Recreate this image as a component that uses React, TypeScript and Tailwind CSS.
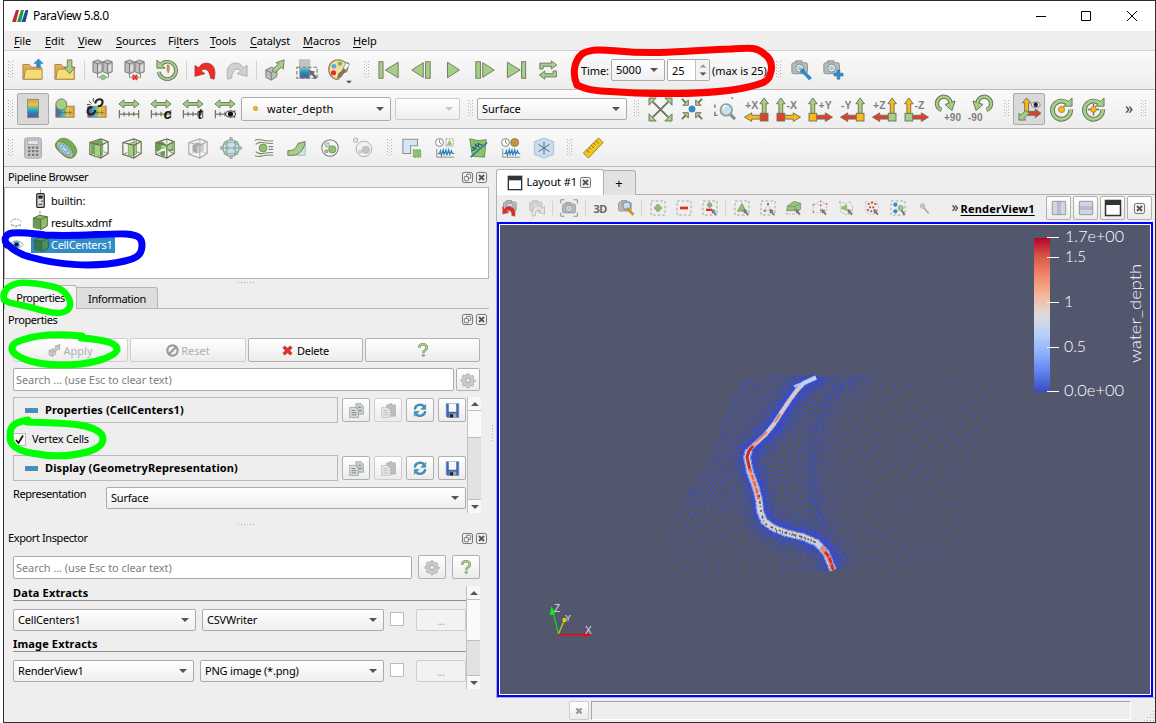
import React from "react";

type Kids = { children?: React.ReactNode };

const G = "#a3d086";
const O = "#6f745c";
const RAINBOW = "url(#rainbow)";

/* ---------- icon drawings, all on a 24 x 24 grid ---------- */

const arrowsH = (
  <>
    <path d="M1 6.5 6.500 2v3h11V2L23 6.500 17.500 11V8h-11v3Z" fill={G} stroke={O} />
    <path d="M1.500 13v9M22.500 13v9M1.500 17.500h21M6.700 15v5M12 15v5M17.200 15v5" stroke={O} strokeWidth="1.300" fill="none" />
  </>
);

const camera = (c = "#b9bab9") => (
  <>
    <rect x="2" y="4" width="17" height="12" rx="2" fill={c} stroke="#8b8c8b" />
    <path d="M6 4V2h7v2" fill={c} stroke="#8b8c8b" />
    <circle cx="10.500" cy="10" r="4.300" fill="#e8eef2" stroke="#7f8587" />
    <circle cx="10.500" cy="10" r="2.400" fill="#9fc9e6" />
  </>
);

const servers = (
  <>
    <path d="m1 3 5-2 5 2v11l-5 2-5-2Z" fill="#bdbdbd" stroke="#777" />
    <path d="m1 3 5 2.500L11 3M6 5.500V16" fill="none" stroke="#777" />
    <path d="m12 3 5-2 5 2v11l-5 2-5-2Z" fill="#bdbdbd" stroke="#777" />
    <path d="m12 3 5 2.500L22 3M17 5.500V16" fill="none" stroke="#777" />
    <path d="m7 7 3-1.500v7L7 14ZM18 7l3-1.500v7L18 14Z" fill="#e5dfe2" />
    <path d="M6 16v4h4M18 16v4h-4" fill="none" stroke="#888" />
  </>
);

const dashBox = <rect x="1.500" y="1.500" width="21" height="21" fill="none" stroke="#909090" strokeWidth="1.200" strokeDasharray="4 3" />;
const smallCursor = <path d="m14 13 7 3-2.500 1 3.500 4-2 2-3.500-4-1.500 2Z" fill="#777" />;

const cube = (edge = "#66704f") => (
  <>
    <path d="m2 6 12-4 8 3v13l-8 5-12-4Z" fill="#f4f4f4" stroke={edge} strokeWidth="1.300" />
    <path d="M14 2v5M2 19l5-2M22 18l-5-2" fill="none" stroke={edge} strokeWidth=".8" />
  </>
);
const cubeFront = (edge = "#66704f") => <path d="m2 6 12 3 8-4M14 9v14" fill="none" stroke={edge} strokeWidth="1.300" />;

function axisIcon(label: string, flip: boolean, up: string, side: string, base: string) {
  const bx = flip ? 16 : 0;
  const cx = bx + 4;
  return (
    <>
      <path d={`M${cx - 2} 16V6h-2.500L${cx} 0l4.500 6h-2.500v10Z`} fill={up} stroke={O} />
      {flip ? (
        <path d="M16 22H7v2.500L-.500 20 7 15.500V18h9Z" fill={side} stroke={O} />
      ) : (
        <path d="M8 22h9v2.500L24.500 20 17 15.500V18H8Z" fill={side} stroke={O} />
      )}
      <rect x={bx} y="16" width="8" height="8" fill={base} stroke={O} />
      <text x={flip ? 0 : 10} y="11.500" fontSize="11" fontWeight="700" fill="#808080" fontFamily="Liberation Sans">
        {label}
      </text>
    </>
  );
}

const R = "#e2402c";
const Y = "#fbb817";

const ring = (
  <>
    <path d="M20 7.500A9.500 9.500 0 1 0 21.500 12" fill="none" stroke={O} strokeWidth="5" />
    <path d="m14 8.500h9V0Z" fill={G} stroke={O} />
    <path d="M20 7.500A9.500 9.500 0 1 0 21.500 12" fill="none" stroke={G} strokeWidth="3" />
  </>
);

const turn = (
  <>
    <path d="M5.500 13A6.800 6.800 0 1 1 14.500 6" fill="none" stroke={O} strokeWidth="4.400" />
    <path d="M9 7.500 19 4l-3 9.500Z" fill={G} stroke={O} />
    <path d="M5.500 13A6.800 6.800 0 1 1 14.500 6" fill="none" stroke={G} strokeWidth="2.400" />
  </>
);

const icons: Record<string, React.ReactNode> = {
  open: (
    <>
      <path d="M1 6h7l2 3h11v13H1Z" fill="#e8ae4d" stroke="#a0834a" />
      <path d="M4 11h18v11H2Z" fill="#f6dc74" stroke="#a0834a" />
      <path d="M16 9V5h-3l5-5 5 5h-3v4Z" fill="#2a8fd0" stroke="#3b7395" strokeWidth=".6" />
    </>
  ),
  save: (
    <>
      <path d="M1 6h7l2 3h12v13H1Z" fill="#e8ae4d" stroke="#a0834a" />
      <path d="M4 11h18v11H2Z" fill="#f6dc74" stroke="#a0834a" />
      <path d="M14.500 1h5v8H23l-6 7-6-7h3.500Z" fill={G} stroke={O} />
    </>
  ),
  connect: (
    <>
      {servers}
      <circle cx="12" cy="20" r="2.700" fill="#8ccb77" stroke="#7b9a70" strokeWidth=".6" />
    </>
  ),
  disconnect: (
    <>
      {servers}
      <path d="m9.500 17.500 5 5m0-5-5 5" stroke="#e2402c" strokeWidth="2.600" />
    </>
  ),
  history: (
    <>
      <path d="M4 8a9.500 9.500 0 1 1-1 6" fill="none" stroke={O} strokeWidth="4" />
      <path d="M1 1v9h9Z" fill={G} stroke={O} />
      <path d="M4 8a9.500 9.500 0 1 1-1 6" fill="none" stroke={G} strokeWidth="2.200" />
      <path d="M12 6.500h2.500v6l-1.200 3-1.300-3Z" fill="#d4a13b" stroke="#94762f" strokeWidth=".5" />
    </>
  ),
  undo: <path d="M1 7v12l11-3-4-3c3-4 9-2 10 8l4 1C25 10 20 5 15 4.500 10 4 7 6 5.500 9.500Z" fill="#ee2b26" stroke="#a23b30" strokeWidth=".7" />,
  redo: <path d="M23 7v12l-11-3 4-3c-3-4-9-2-10 8l-4 1C-1 10 4 5 9 4.500c5-.5 8 1.500 9.500 5Z" fill="#cfcfcf" stroke="#a2a2a2" strokeWidth=".8" />,
  extract: (
    <>
      <path d="m2 12 6-3 6 2v8l-6 4-6-3Z" fill="#bdbdbd" stroke="#777" />
      <path d="m2 12 6 3 6-4M8 15v8" stroke="#777" fill="none" />
      <path d="m9 12 7-7-3-1 9-3-1 10-2-2-7 6Z" fill={G} stroke={O} />
    </>
  ),
  mapsel: (
    <>
      <rect x="4" y="1" width="11" height="20" fill={RAINBOW} stroke="#aaa" />
      <rect x="4" y="1" width="11" height="9" fill="#c2c3c6" />
      <rect x="1" y="9" width="22" height="12" fill="none" stroke="#777" strokeWidth="1.200" strokeDasharray="4 2" />
      <path d="m14 12 7 2-2 1.500 4 4.500-2 2-4-5-1.500 2Z" fill="#666" />
    </>
  ),
  palette: (
    <>
      <path d="M11 1C4 1 0 7 1 13c1 7 7 10 10 9 3-2-1-5 2-7 3-1 7 1 8-3C23 5 17 1 11 1Z" fill="#f5dca5" stroke="#8f8157" strokeWidth="1.400" />
      <circle cx="6.500" cy="8" r="2.600" fill="#4eaee0" />
      <circle cx="13" cy="5" r="2.400" fill="#75b45d" />
      <circle cx="6" cy="15" r="2.800" fill="#e52b24" />
      <path d="m21 4 2 1-7 12c-2 4-5 4-6 3 3-2 1-4 4-5Z" fill="#8a7a55" stroke="#555" strokeWidth=".8" />
      <path d="m20 4 3.500 2-4 6-3-2Z" fill="#fff" stroke="#777" strokeWidth=".7" />
    </>
  ),
  first: (
    <>
      <rect x="1" y="3" width="4.500" height="18" fill={G} stroke={O} />
      <path d="M22 3.500v17L8 12Z" fill={G} stroke={O} />
    </>
  ),
  prev: (
    <>
      <rect x="17" y="3" width="5" height="18" fill={G} stroke={O} />
      <path d="M14.500 4v16L2 12Z" fill={G} stroke={O} />
    </>
  ),
  play: <path d="M6 3.500 19 12 6 20.500Z" fill={G} stroke={O} />,
  next: (
    <>
      <rect x="2" y="3" width="5" height="18" fill={G} stroke={O} />
      <path d="M9.500 4v16L22 12Z" fill={G} stroke={O} />
    </>
  ),
  last: (
    <>
      <rect x="17" y="3" width="4.500" height="18" fill={G} stroke={O} />
      <path d="M1.500 3.500v17L15.500 12Z" fill={G} stroke={O} />
    </>
  ),
  loop: (
    <>
      <path d="M2 11V4.500h12.500V2l6 4.500-6 4.500V8H5.500v3Z" fill={G} stroke={O} />
      <path d="M20 13v6.500H7.500V22l-6-4.500 6-4.500v3h9v-3Z" fill={G} stroke={O} />
    </>
  ),
  camwrench: (
    <>
      {camera()}
      <path d="m12 11 3 0 1.500 3 7 6.500-2.500 2.500-6.500-7-3-1.500Z" fill="#2a8fd0" stroke="#356d94" strokeWidth=".6" />
    </>
  ),
  camplus: (
    <>
      {camera()}
      <path d="M16.500 12h3v3.500H23v3h-3.500V22h-3v-3.500H13v-3h3.500Z" fill="#2a8fd0" stroke="#356d94" strokeWidth=".6" />
    </>
  ),
  bar: <rect x="6" y="1.500" width="12" height="20" fill={RAINBOW} stroke="#8a8a7a" />,
  editmap: (
    <>
      <rect x="2" y="9" width="20" height="12" fill="url(#rainbowH)" stroke="#8d8a63" />
      <path d="M4 16h16M7 14v4M12 14v4M17 14v4" stroke="#666" strokeWidth=".8" />
      <circle cx="8" cy="7" r="6" fill={G} stroke={O} />
    </>
  ),
  unlink: (
    <>
      <rect x="2" y="9" width="20" height="12" fill="url(#rainbowH)" stroke="#8d8a63" />
      <path d="M4 16h16M12 14v4M17 14v4" stroke="#666" strokeWidth=".8" />
      <path d="M10 6c1-6 9-6 8-1 0 2-2 4-5 4M7 10c-6 0-7 7-2 8 3 0 5-2 5-5" fill="none" stroke="#222" strokeWidth="2.400" />
      <path d="m3 3 3 3M8 0v4M1 7h4" fill="none" stroke="#444" strokeWidth="1" />
    </>
  ),
  range: arrowsH,
  rangec: (
    <>
      {arrowsH}
      <text x="15" y="22.500" fontSize="15" fontWeight="700" fontStyle="italic" fontFamily="Liberation Sans" fill="#111">c</text>
    </>
  ),
  ranget: (
    <>
      {arrowsH}
      <text x="17" y="23" fontSize="15" fontWeight="700" fontStyle="italic" fontFamily="Liberation Sans" fill="#111">t</text>
    </>
  ),
  rangev: (
    <>
      {arrowsH}
      <ellipse cx="18" cy="17.500" rx="5.500" ry="3.500" fill="#ddd" stroke="#333" />
      <circle cx="18" cy="17.500" r="2.800" fill="#111" />
    </>
  ),
  reset: (
    <>
      <path d="m4 4 16 16M20 4 4 20" stroke={O} strokeWidth="2" />
      <path d="M0 0h7.500L0 7.500ZM24 0h-7.500L24 7.500ZM0 24h7.500L0 16.500ZM24 24h-7.500L24 16.500Z" fill={G} stroke={O} />
    </>
  ),
  zoomdata: (
    <>
      <path d="m1 1 5 5M23 1l-5 5M1 23l5-5M23 23l-5-5" stroke={O} strokeWidth="2" />
      <path d="M8 2v6H2ZM16 2v6h6ZM8 22v-6H2ZM16 22v-6h6Z" fill={G} stroke={O} />
      <circle cx="12" cy="12" r="3.400" fill="#2a8fd0" stroke="#356d94" strokeWidth=".7" />
    </>
  ),
  zoombox: (
    <>
      <path d="M2 7v4M2 15v4h3M20 0h2" stroke="#777" strokeWidth="1.500" fill="none" />
      <path d="m18 17 6 6" stroke="#8d8d8d" strokeWidth="3.500" />
      <circle cx="14.500" cy="13" r="6.300" fill="#c6e1f2" stroke="#999c9e" strokeWidth="2" />
      <path d="M11 12c0-2 1.500-3.500 3.500-3.500" fill="none" stroke="#fff" strokeWidth="1.500" />
    </>
  ),
  px: axisIcon("+X", true, G, Y, R),
  mx: axisIcon("-X", false, G, Y, R),
  py: axisIcon("+Y", false, G, R, Y),
  my: axisIcon("-Y", true, G, R, Y),
  pz: axisIcon("+Z", true, Y, R, G),
  mz: axisIcon("-Z", false, Y, R, G),
  rotp: (
    <>
      {turn}
      <text x="8" y="24" fontSize="10" fontWeight="700" fontFamily="Liberation Sans" fill="#808080">+90</text>
    </>
  ),
  rotm: (
    <>
      <g transform="translate(24 0) scale(-1 1)">{turn}</g>
      <text x="0" y="24" fontSize="10" fontWeight="700" fontFamily="Liberation Sans" fill="#808080">-90</text>
    </>
  ),
  axes: (
    <>
      <path d="M7 15V5H4.500L9 0l4.500 5H11v10Z" fill={Y} stroke={O} />
      <path d="M10 14h8v-2.500L24 16l-6 4.500V18h-8Z" fill={R} stroke={O} />
      <path d="m8 13 4 3-6 5 2 2H1v-7l2 2Z" fill={G} stroke={O} />
      <ellipse cx="18.500" cy="7" rx="4.500" ry="2.800" fill="#eee" stroke="#777" />
      <circle cx="18.500" cy="7" r="2.300" fill="#222" />
    </>
  ),
  center: (
    <>
      {ring}
      <circle cx="12" cy="12" r="3.200" fill={Y} stroke="#a6853c" />
    </>
  ),
  pick: (
    <>
      {ring}
      <path d="M12 6v12M6 12h12" stroke="#666" strokeWidth="1.500" />
      <circle cx="12" cy="12" r="3" fill={Y} stroke="#a6853c" />
    </>
  ),
  calc: (
    <>
      <rect x="3" y="1" width="18" height="22" rx="2" fill="#c9cac9" stroke="#999" />
      <rect x="6" y="3.500" width="12" height="4.500" fill="#d6e8f8" stroke="#999" strokeWidth=".7" />
      <path d="M6.500 11.500h11.500M6.500 15.500h11.500M6.500 19.500h11.500" stroke="#7a7c6c" strokeWidth="2.400" strokeDasharray="2.800 1.500" />
    </>
  ),
  contour: (
    <g transform="rotate(42 12 12)">
      <path d="M0 13C0 6 5 3 12 3s13 3 13 9-5 8-13 8S0 19 0 13Z" fill="#6fb14c" stroke={O} strokeWidth=".8" />
      <ellipse cx="12" cy="14" rx="11.500" ry="5.500" fill="#a3cf95" stroke={O} strokeWidth=".8" />
      <ellipse cx="12" cy="14" rx="8" ry="3.700" fill="#a6cfec" stroke="#6a8c8a" strokeWidth=".8" />
      <ellipse cx="12" cy="14" rx="4" ry="1.700" fill="#d3e8f8" stroke="#3c87ae" strokeWidth=".8" />
    </g>
  ),
  clip: (
    <>
      {cube()}
      <path d="m3 6.500 10-4 3 1.500v15l-4 1-9-2Z" fill="#79a65d" />
      <path d="m7 8.500 9-2v13l-9 2.500Z" fill={G} stroke="#6f8d55" strokeWidth=".7" />
      {cubeFront()}
    </>
  ),
  slice: (
    <>
      {cube()}
      <path d="m8 7.500 9-3v14l-9 3Z" fill={G} stroke="#6f8d55" strokeWidth=".7" />
      {cubeFront()}
    </>
  ),
  threshold: (
    <>
      {cube()}
      <path d="m2 6 6-2 5 4-1 5H8l-4 3-2-1ZM14 9l7-3v9l-4 1-3-2ZM7 16l5-1v6l-5-1Z" fill="#6b9a50" />
      <path d="m14 9 6-2v6l-6 1ZM8 9l4-1v5H8Z" fill={G} />
      {cubeFront()}
    </>
  ),
  subset: (
    <>
      {cube("#aaa")}
      <path d="m6 9 5-3 7 2v7l-7 3-5-2Z" fill="#aaa" />
      <path d="m11 10 7-2v7l-7 3Z" fill="#cfcfcf" />
      {cubeFront("#aaa")}
    </>
  ),
  glyph: (
    <>
      <circle cx="12" cy="12" r="9" fill="#cbdff0" stroke="#7a9bb2" strokeWidth="1.200" />
      <path d="M6 6h12M6 18h12M4 12h16M8 4l-1 8 1 8M16 4l1 8-1 8" fill="none" stroke="#7d9cb0" strokeWidth=".8" />
      {[[12, 2], [12, 22], [2, 12], [22, 12], [6, 6.5], [18, 6.5], [6, 17.5], [18, 17.5], [8, 12], [16, 12]].map(([x, y]) => (
        <circle key={`${x}-${y}`} cx={x} cy={y} r="1.700" fill={G} stroke="#7d8f6a" strokeWidth=".6" />
      ))}
    </>
  ),
  stream: (
    <>
      <path d="M2 4c5-4 9 2 20 0M3 8c5-5 9 0 19-1M3 16c5 5 9 0 19 1M2 20c5 4 9-2 20 0M17 10.500h5M17 13.500h5" fill="none" stroke="#84876f" strokeWidth="1.100" />
      <circle cx="11" cy="12" r="4.300" fill="#8ac56b" stroke={O} strokeWidth=".8" />
    </>
  ),
  warp: (
    <>
      <path d="M10 17 21 8v12H12Z" fill="#cfe7e7" stroke="#9bc0c0" />
      <path d="M2 15c7 0 9-3 11-8l8-2c-1 8-6 14-12 15H2Z" fill={G} stroke={O} />
    </>
  ),
  group: (
    <>
      <circle cx="12" cy="12" r="9" fill="#f4f6f2" stroke="#777" strokeWidth="1.100" />
      <circle cx="14.500" cy="13.500" r="4" fill="#8ac56b" stroke={O} strokeWidth=".7" />
      <circle cx="9" cy="8.500" r="2.600" fill="#b9dcda" stroke="#899" strokeWidth=".7" />
      <circle cx="8" cy="15.500" r="1.700" fill={G} stroke={O} strokeWidth=".7" />
    </>
  ),
  ungroup: (
    <>
      <circle cx="13" cy="13" r="8.500" fill="#f2f2f2" stroke="#aaa" />
      <circle cx="15" cy="14" r="4" fill="#c4c4c4" stroke="#aaa" strokeWidth=".7" />
      <circle cx="9" cy="16" r="1.700" fill="#ddd" stroke="#aaa" strokeWidth=".7" />
      <circle cx="4" cy="3.500" r="2.500" fill="#e5e5e5" stroke="#aaa" />
    </>
  ),
  subsetsel: (
    <>
      <path d="M2 2.500h16v7h-7.500v8.500H2Z" fill="#d3e7f6" stroke="#8b9299" strokeWidth="1.200" />
      <rect x="13.500" y="14" width="8" height="8" fill="#8ac56b" stroke="#6f9b5a" strokeDasharray="2 1" />
    </>
  ),
  plotsel: (
    <>
      <circle cx="6" cy="6" r="4.300" fill="#fff" stroke="#777" />
      <path d="M6 3v3l2 1.500" stroke="#777" fill="none" />
      <rect x="13" y="2" width="8" height="8" fill="none" stroke="#999" strokeDasharray="2 1" />
      <path d="m17 3 3 6h-6Z" fill="#8ac56b" />
      <path d="M3 13v9h19" stroke="#888" fill="none" />
      <path d="m4 18 2 0 1-3 1 5 2-6 1 5 2-5 1 6 2-6 1 5 2-4 1 3h2" stroke="#2b80b8" strokeWidth="1.300" fill="none" />
    </>
  ),
  plotline: (
    <>
      <path d="m3 2 9 2 9-1-2 19-13-1Z" fill="#8ac56b" stroke="#628a4c" />
      <path d="M4 22 22 6" stroke="#28759f" strokeWidth="1.600" />
      <path d="m5 15 3-1-2-3 4 2-1-5 4 3-1-4 5 2" stroke="#225e83" strokeWidth="1.200" fill="none" />
    </>
  ),
  plotdata: (
    <>
      <circle cx="6" cy="6" r="4.300" fill="#fff" stroke="#777" />
      <path d="M6 3v3l2 1.500" stroke="#777" fill="none" />
      <circle cx="16" cy="6" r="4.300" fill="#bd9642" stroke="#91783f" />
      <path d="M3 13v9h19" stroke="#888" fill="none" />
      <path d="m4 18 2 0 1-3 1 5 2-6 1 5 2-5 1 6 2-6 1 5 2-4 1 3h2" stroke="#2b80b8" strokeWidth="1.300" fill="none" />
    </>
  ),
  probe: (
    <>
      <path d="m1.500 5 10.500-4L22.500 5v14L12 23 1.500 19Z" fill="#c8ddf0" stroke="#a6bfd2" />
      <path d="M12 5v14M6 8l12 8M18 8 6 16" stroke="#597486" strokeWidth="1.100" />
    </>
  ),
  ruler: (
    <>
      <path d="m18 1 5 5L7 23 1.500 17.500Z" fill="#f7c41d" stroke="#957d2b" />
      <path d="m15 4 3 3M12.500 6.500l2 2M10 9l3 3M7.500 11.500l2 2M5 14l3 3" stroke="#6d5d22" strokeWidth="1" />
    </>
  ),
  vundo: (
    <>
      {camera()}
      <path d="M1 10v10l8-2-3-2c2-3 8-1 7 6l4 1c2-9-3-13-8-13-3 0-5 2-6 4Z" fill="#e22b24" stroke="#a23b30" strokeWidth=".6" />
    </>
  ),
  vredo: (
    <g opacity=".5">
      {camera()}
      <path d="M22 10v10l-8-2 3-2c-2-3-8-1-7 6l-4 1C4 13 9 9 13 9c3 0 5 2 6 4Z" fill="#ddd" stroke="#777" />
    </g>
  ),
  capture: (
    <>
      <g transform="translate(1.500 2.500)">{camera()}</g>
      <path d="M1 6V1h5M18 1h5v5M1 18v5h5M18 23h5v-5" fill="none" stroke="#888" strokeWidth="1.200" />
    </>
  ),
  campen: (
    <>
      {camera()}
      <circle cx="13" cy="9" r="5" fill="#c3dff1" stroke="#7d8b92" strokeWidth="1.500" />
      <path d="m13 12 9 9" stroke="#c69327" strokeWidth="3.500" />
    </>
  ),
  selplus: (
    <>
      {dashBox}
      <path d="M10 7h4v3h3v4h-3v3h-4v-3H7v-4h3Z" fill="#8ac56b" stroke={O} strokeWidth=".7" />
    </>
  ),
  selminus: (
    <>
      {dashBox}
      <rect x="6" y="10" width="12" height="4" fill="#e22b24" />
    </>
  ),
  seltoggle: (
    <>
      {dashBox}
      <path d="M10 4h3v2h2v3h-2v2h-3V9H8V6h2Z" fill="#8ac56b" stroke={O} strokeWidth=".7" />
      <rect x="6" y="13" width="9" height="3.500" fill="#e22b24" />
      {smallCursor}
    </>
  ),
  selcells: (
    <>
      {dashBox}
      <path d="m12 5 6 12H5Z" fill="#8ac56b" stroke={O} strokeWidth=".8" />
      {smallCursor}
    </>
  ),
  selpoints: (
    <>
      {dashBox}
      <path d="m12 6 5 10H7Z" fill="none" stroke="#bbb" />
      <path d="M10.500 4.500h3v3h-3ZM5.500 14.500h3v3h-3ZM15.500 14.500h3v3h-3Z" fill="#cf5549" />
      {smallCursor}
    </>
  ),
  frust: (
    <>
      <path d="M1 13v8h6M9 21h6" stroke="#999" strokeWidth="1.200" fill="none" strokeDasharray="4 2" />
      <path d="m2 9 10-7 10 3v9l-9 2H2Z" fill="#93c57a" stroke={O} strokeWidth=".9" />
      <path d="m2 9 11 1 9-5M13 10v6" fill="none" stroke={O} strokeWidth=".8" />
      {smallCursor}
    </>
  ),
  frustp: (
    <>
      <path d="m2 7 10-5 10 4v10l-9 3H2V7h11l9-2M13 7v12" fill="none" stroke="#c3aeac" strokeDasharray="3 2" />
      <path d="M1 6h2v2H1ZM12 1h2v2h-2ZM21 5h2v2h-2ZM12 7h2v2h-2ZM1 17h2v2H1ZM12 15h2v2h-2Z" fill="#d8453c" />
      {smallCursor}
    </>
  ),
  poly: (
    <>
      <path d="m2 2 9 4 7-4 4 9-1 10-9 1-9-5 3-5Z" fill="none" stroke="#999" strokeDasharray="3 2" />
      <path d="m4 12 9-5v9Z" fill="#8ac56b" stroke="#6f9b5a" strokeWidth=".6" />
      {smallCursor}
    </>
  ),
  polyp: (
    <>
      <path d="m2 2 9 2 8-2 3 9-3 9-9 2-7-5Z" fill="none" stroke="#aaa" strokeDasharray="3 2" />
      {[[7, 6], [12, 4], [17, 6], [9, 11], [14, 11], [11, 17], [17, 16], [6, 15]].map(([x, y]) => (
        <circle key={`${x}-${y}`} cx={x} cy={y} r="1.600" fill="#c0492f" />
      ))}
      {smallCursor}
    </>
  ),
  block: (
    <>
      {dashBox}
      <circle cx="8" cy="7" r="3.200" fill="#2b8fc9" />
      <circle cx="8" cy="17" r="3.200" fill="#2b8fc9" />
      <path d="m17 15 5 7" stroke="#666" strokeWidth="2.400" />
      <circle cx="16" cy="12" r="4" fill="#97cd78" stroke={O} strokeWidth=".6" />
    </>
  ),
  magn: (
    <>
      <circle cx="10" cy="9" r="3.500" fill="#c7c7c7" stroke="#aaa" />
      <path d="m12 12 7 8" stroke="#aaa" strokeWidth="2.500" />
    </>
  ),
  gear: (
    <>
      <path
        d="M10 2h4l.7 3 2.200 1 2.700-1.700 2.600 3-1.600 2.600.8 2.100 3 .5v3l-3 .7-1 2.300 1.500 2.500-2.700 2.500-2.500-1.600-2 .9-.7 3h-4l-.7-3-2.200-1L4.500 23 2 20.300l1.500-2.500-1-2.300-2.500-.7v-3.500l2.500-.6 1-2.300L2 5.800 4.600 3.400 7 5l2.300-1Z"
        fill="#cbcbcb"
        stroke="#999"
        transform="translate(0 -.500)"
      />
      <circle cx="12" cy="12.500" r="4" fill="#ededed" stroke="#999" strokeWidth="1.500" />
    </>
  ),
  copy: (
    <>
      <path d="M11 1h8l4 4v13H11Z" fill="#c9ceca" stroke="#8d948f" />
      <path d="M1 7h9l5 4v12H1Z" fill="#d9dedb" stroke="#868c88" />
      <path d="M4 12h6M4 15.500h8M4 19h8M15 7h4M16 12h4" stroke="#6b716d" strokeWidth="1.300" />
    </>
  ),
  paste: (
    <>
      <path d="M9 3h3l2-2h3l2 2h4v18H9Z" fill="#bdbdbd" stroke="#a5a5a5" />
      <path d="M1 7h9l5 4v12H1Z" fill="#e6e6e6" stroke="#b5b5b5" />
      <path d="M4 12h6M4 15.500h8M4 19h8" stroke="#b5b5b5" strokeWidth="1.200" />
    </>
  ),
  refresh: (
    <>
      <path d="M3 11c1-9 12-10 16-5" fill="none" stroke="#6b7c83" strokeWidth="4" />
      <path d="M3 11c1-9 12-10 16-5" fill="none" stroke="#2a9ad4" strokeWidth="2.600" />
      <path d="M22 2v9h-9Z" fill="#2a9ad4" stroke="#6b7c83" strokeWidth=".7" />
      <path d="M21 14c-1 9-12 10-16 5" fill="none" stroke="#6b7c83" strokeWidth="4" />
      <path d="M21 14c-1 9-12 10-16 5" fill="none" stroke="#2a9ad4" strokeWidth="2.600" />
      <path d="M2 23v-9h9Z" fill="#2a9ad4" stroke="#6b7c83" strokeWidth=".7" />
    </>
  ),
  disk: (
    <>
      <path d="M2 1h20v22H4l-2-2Z" fill="#3e69ae" stroke="#5f82bb" />
      <rect x="6" y="1" width="12" height="13" fill="#f6f8fb" />
      <rect x="7" y="17" width="11" height="6" fill="#a9a99c" />
      <rect x="8" y="18" width="5" height="5" fill="#1c1c1c" />
    </>
  ),
  help: (
    <>
      <path d="M5.500 8c0-8 13-8 13 0 0 5-6 4-6 9" fill="none" stroke="#7c8569" strokeWidth="4.400" />
      <path d="M5.500 8c0-8 13-8 13 0 0 5-6 4-6 8.500" fill="none" stroke={G} strokeWidth="2.600" />
      <circle cx="12.500" cy="21" r="2.300" fill={G} stroke="#7c8569" />
    </>
  ),
  cross: <path d="m6 2 6 5 6-5 4 4-5 6 5 6-4 4-6-5-6 5-4-4 5-6-5-6Z" fill="#ee2b26" stroke="#8b4a3c" strokeWidth="1.600" />,
  crossGrey: <path d="m6 2 6 5 6-5 4 4-5 6 5 6-4 4-6-5-6 5-4-4 5-6-5-6Z" fill="#999" />,
  forbid: (
    <>
      <circle cx="12" cy="12" r="9.500" fill="none" stroke="#999" strokeWidth="4" />
      <path d="M5 19 19 5" stroke="#999" strokeWidth="4" />
    </>
  ),
  applyGrey: (
    <>
      <path d="m2 12 6-3 6 2v8l-6 4-6-3Z" fill="#ccc" stroke="#aaa" strokeWidth="1.500" />
      <path d="m2 12 6 3 6-4M8 15v8" stroke="#aaa" fill="none" strokeWidth="1.500" />
      <path d="m9 12 7-7-3-1 9-3-1 10-2-2-7 6Z" fill="#c6c6c6" stroke="#aaa" strokeWidth="1.500" />
    </>
  ),
  window: (
    <>
      <rect x="1" y="1" width="22" height="22" fill="#2f3437" />
      <rect x="3" y="8" width="18" height="13" fill="#fdfdfd" />
    </>
  ),
  splitV: (
    <>
      <rect x="2" y="2" width="20" height="20" rx="1" fill="#cfd6ea" stroke="#999" strokeWidth="1.500" />
      <path d="M10.500 2v20M13.500 2v20" stroke="#999" strokeWidth="1.300" />
    </>
  ),
  splitH: (
    <>
      <rect x="2" y="2" width="20" height="20" rx="1" fill="#cfd6ea" stroke="#999" strokeWidth="1.500" />
      <path d="M2 10.500h20M2 13.500h20" stroke="#999" strokeWidth="1.300" />
    </>
  ),
  float: (
    <>
      <rect x="1" y="1" width="22" height="22" rx="4" fill="#f2f2f2" stroke="#666" strokeWidth="2" />
      <rect x="10" y="5" width="9" height="9" rx="1" fill="none" stroke="#666" strokeWidth="1.800" />
      <rect x="5" y="10" width="9" height="9" rx="1" fill="#f2f2f2" stroke="#666" strokeWidth="1.800" />
    </>
  ),
  close: (
    <>
      <rect x="1" y="1" width="22" height="22" rx="4" fill="#f2f2f2" stroke="#666" strokeWidth="2" />
      <path d="m6.500 6.500 11 11m0-11-11 11" stroke="#555" strokeWidth="4" />
    </>
  ),
  server: (
    <>
      <rect x="6" y="1" width="12" height="22" rx="2" fill="#ddd" stroke="#222" strokeWidth="2" />
      <rect x="8.500" y="4" width="7" height="5" fill="#222" />
      <path d="M13 13h3M9 18h6" stroke="#555" strokeWidth="2" />
      <path d="M12-6v6" stroke="#999" strokeWidth="1.500" />
    </>
  ),
  node: (
    <>
      <path d="M12-5v6" stroke="#999" strokeWidth="1.500" />
      <path d="m2 6 9-4 12 2v14l-9 5-12-3Z" fill="#8fbf6a" stroke="#5b6b46" strokeWidth="1.500" />
      <path d="m2 6 11 2v15L2 20Z" fill="#6b9b52" />
      <path d="m2 6 11 2 10-4M13 8v15" fill="none" stroke="#55643f" strokeWidth="1.300" />
    </>
  ),
  nodeSel: (
    <>
      <path d="m2 6 9-4 12 2v14l-9 5-12-3Z" fill="#4f9060" stroke="#37604f" strokeWidth="1.500" />
      <path d="m2 6 11 2v15L2 20Z" fill="#3a7550" />
      <path d="m2 6 11 2 10-4M13 8v15" fill="none" stroke="#2f5a4a" strokeWidth="1.300" />
    </>
  ),
  eye: (
    <>
      <path d="M0 12c5-9 19-9 24 0-5 8-19 8-24 0Z" fill="#fff" stroke="#888" strokeWidth="1.500" />
      <circle cx="12" cy="12" r="6" fill="#3b94c4" />
      <circle cx="12" cy="12" r="3.400" fill="#0a1420" />
    </>
  ),
  eyeOff: (
    <path d="M1 12c5-8 17-8 22 0M2 16c5 5 15 5 20 0M5 18l-2 3M12 20v3M19 18l2 3" fill="none" stroke="#777" strokeWidth="1.700" strokeDasharray="3 2" />
  ),
};

function Ic({ n, c = "size-6" }: { n: string; c?: string }) {
  return (
    <svg viewBox="0 0 24 24" className={`${c} shrink-0 overflow-visible`}>
      {icons[n]}
    </svg>
  );
}

/* ---------- small building blocks ---------- */

const BTN = "flex items-center justify-center rounded-[2px] border bg-linear-to-b from-white to-[#ececec]";

function Cell({ n, c = "w-8", s = "size-[22px]" }: { n: string; c?: string; s?: string }) {
  return (
    <div className={`${c} flex h-8 shrink-0 items-center justify-center`}>
      <Ic n={n} c={s} />
    </div>
  );
}

function Grip({ c }: { c: string }) {
  return (
    <div className={`${c} flex shrink-0 justify-end`}>
      <svg className="h-[18px] w-[5px]">
        <path d="M.500 0v18M4.500 0v18" stroke="#b4b4b4" strokeDasharray="1 2" />
        <path d="M2.500 1v17" stroke="#c9c9c9" strokeDasharray="1 2" />
      </svg>
    </div>
  );
}

function Sep({ c = "w-1.5", h = "h-[19px]" }: { c?: string; h?: string }) {
  return (
    <div className={`${c} ${h} flex shrink-0 justify-center`}>
      <div className="w-px bg-[#d2d2d2]" />
    </div>
  );
}

function Tri({ up = false, c = "text-[#555]" }: { up?: boolean; c?: string }) {
  return (
    <svg viewBox="0 0 8 4" className={`${c} h-1 w-2 shrink-0`}>
      <path d={up ? "M0 4h8L4 0Z" : "M0 0h8L4 4Z"} fill="currentColor" />
    </svg>
  );
}

function Combo({ c, children, dim }: Kids & { c: string; dim?: boolean }) {
  return (
    <div className={`${c} flex shrink-0 items-center rounded-[2px] border bg-linear-to-b from-white to-[#efefef] pr-1.5 pl-1 ${dim ? "border-[#cbcbcb]" : "border-[#ababab]"}`}>
      <div className="flex flex-1 items-center pb-0.5">{children}</div>
      <Tri c={dim ? "text-[#c8c8c8]" : "text-[#555]"} />
    </div>
  );
}

function Dock({ title, c }: { title: string; c: string }) {
  return (
    <div className={`${c} flex shrink-0 items-center pr-0.5 pl-1`}>
      <span className="flex-1 pb-px tracking-[-0.400px]">{title}</span>
      <Ic n="float" c="mr-[3px] size-[11px]" />
      <Ic n="close" c="size-[11px]" />
    </div>
  );
}

function Dots() {
  return (
    <svg className="mx-auto h-px w-4">
      <path d="M0 .500h16" stroke="#aaa" strokeDasharray="1 2" />
    </svg>
  );
}

function ScrollBar({ c, thumb }: { c: string; thumb: string }) {
  return (
    <div className={`${c} flex w-3.5 shrink-0 flex-col border-l border-[#c0c0c0] bg-[#e2e2e2]`}>
      <div className="flex h-[13px] items-center justify-center bg-[#f8f8f8]"><Tri up /></div>
      <div className={`${thumb} border-y border-[#bdbdbd] bg-[#fafafa]`} />
      <div className="flex-1" />
      <div className="flex h-[14px] items-center justify-center border-t border-[#bdbdbd] bg-[#f8f8f8]"><Tri /></div>
    </div>
  );
}

function Group({ title }: { title: string }) {
  return (
    <div className="flex h-[26px] gap-1">
      <div className="flex w-[325px] items-center border border-[#b9b9b9] pl-[11px]">
        <div className="mr-[7px] h-[5px] w-[13px] border border-[#6b8795] bg-[#2a95d0]" />
        <b className="pb-0.5 tracking-[0.100px]">{title}</b>
      </div>
      <div className={`${BTN} my-px w-7 border-[#b0b0b0]`}><Ic n="copy" c="size-[15px]" /></div>
      <div className={`${BTN} my-px w-7 border-[#cfcfcf]`}><Ic n="paste" c="size-[15px]" /></div>
      <div className={`${BTN} my-px w-7 border-[#b0b0b0]`}><Ic n="refresh" c="size-3.5" /></div>
      <div className={`${BTN} my-px w-7 border-[#b0b0b0]`}><Ic n="disk" c="size-[15px]" /></div>
    </div>
  );
}

function ExtractRow({ title, a, b, ca, cb }: { title: string; a: string; b: string; ca: string; cb: string }) {
  return (
    <div className="h-[51px]">
      <div className="flex h-[15px] items-center border-b border-[#8f8f8f] pb-0.5"><b className="tracking-[0.150px]">{title}</b></div>
      <div className="mt-2 flex h-[22px] items-center gap-1.5">
        <Combo c={ca}>{a}</Combo>
        <Combo c={cb}>{b}</Combo>
        <div className="mb-0.5 size-3.5 shrink-0 border border-[#bcbcbc] bg-white" />
        <div className="ml-1.5 flex h-[22px] flex-1 items-center justify-center rounded-[2px] border border-[#cfcfcf] bg-[#f2f2f2] text-[#aaa]">...</div>
      </div>
    </div>
  );
}

/* ---------- point cloud of the cell centres ---------- */

const river: [number, number][] = [
  [816, 377.5], [804, 383], [797, 390], [789, 401], [781, 413], [774, 424], [765, 435], [755, 444], [749, 450],
  [747, 457], [750, 472], [756, 488], [759, 500], [760, 511], [764, 521], [773, 528], [786, 533], [803, 537],
  [817, 543], [826, 553], [833, 570],
];
const ditch: [number, number][] = [[856, 376], [832, 392], [820, 415], [813, 440], [810, 470], [812, 500], [822, 530], [840, 562]];
const hull: [number, number][] = [
  [741, 379], [775, 374], [800, 377], [820, 377], [858, 374], [930, 374], [980, 382], [991, 402], [988, 420], [970, 450],
  [966, 500], [958, 535], [941, 571], [880, 563], [845, 566], [830, 571], [780, 572], [700, 572], [653, 566], [665, 535],
  [680, 505], [705, 465], [722, 420],
];

function distTo(line: [number, number][], x: number, y: number) {
  let best = 1e9;
  for (let i = 1; i < line.length; i++) {
    const [ax, ay] = line[i - 1];
    const [bx, by] = line[i];
    const dx = bx - ax;
    const dy = by - ay;
    const t = Math.max(0, Math.min(1, ((x - ax) * dx + (y - ay) * dy) / (dx * dx + dy * dy)));
    best = Math.min(best, Math.hypot(x - ax - t * dx, y - ay - t * dy));
  }
  return best;
}

function inside(x: number, y: number) {
  let r = false;
  for (let i = 0, j = hull.length - 1; i < hull.length; j = i++) {
    const [xi, yi] = hull[i];
    const [xj, yj] = hull[j];
    if (yi > y !== yj > y && x < ((xj - xi) * (y - yi)) / (yj - yi) + xi) r = !r;
  }
  return r;
}

function makeCloud() {
  let s = 12345;
  const rnd = () => (s = (s * 1664525 + 1013904223) % 4294967296) / 4294967296;
  const grid = new Map<number, [number, number][]>();
  let d = "";
  for (let k = 0; k < 90000; k++) {
    const x = 650 + rnd() * 345;
    const y = 372 + rnd() * 202;
    if (!inside(x, y)) continue;
    const dr = distTo(river, x, y);
    const dd = distTo(ditch, x, y);
    let r = x > 765 ? 4.6 : 3.5;
    if (x > 830) r = 4.4 + (x - 830) * 0.1;
    if (y > 505 && x < 780) r = 4 + (y - 505) * 0.12;
    if (dd < 18) r = Math.min(r, 2.3 + dd * 0.13);
    if (dr < 22) r = Math.min(r, 1 + Math.max(0, dr - 4) * 0.17);
    r = Math.min(r, 9.5);
    const gx = Math.floor(x / 10);
    const gy = Math.floor(y / 10);
    let ok = true;
    for (let i = -1; i < 2 && ok; i++)
      for (let j = -1; j < 2 && ok; j++)
        for (const [px, py] of grid.get((gx + i) * 1000 + gy + j) ?? [])
          if (Math.hypot(px - x, py - y) < r) {
            ok = false;
            break;
          }
    if (!ok) continue;
    const key = gx * 1000 + gy;
    grid.set(key, [...(grid.get(key) ?? []), [x, y]]);
    d += `M${Math.round(x)} ${Math.round(y)}h2`;
  }
  return d;
}

const cloud = makeCloud();
const riverPath = "M" + river.map((p) => p.join(" ")).join("L");
const lowerRiver = "M" + river.slice(8).map((p) => p.join(" ")).join("L");

function Scene() {
  return (
    <svg viewBox="500 225 650 469" className="h-[469px] w-[650px]">
      <path d={cloud} stroke="#3b4cc0" strokeWidth="2" shapeRendering="crispEdges" />
      <g fill="none" strokeLinejoin="round">
        <path d={riverPath} stroke="#3b4cc0" strokeWidth="10" />
        <path d={riverPath} stroke="#7396f2" strokeWidth="5" strokeDasharray="5 1 3 .5" />
        <path d={lowerRiver} stroke="#7396f2" strokeWidth="8" strokeDasharray="5 1 3 .5" />
        <path d="M794 386.500 806 382" stroke="#a9c2f5" strokeWidth="2.500" />
        <path d={riverPath} stroke="#c5d3ea" strokeWidth="3.600" />
        <path d={lowerRiver} stroke="#c5d3ea" strokeWidth="5.500" />
        <path d="M801 387 789 401 781 413 774 424 765 435 755 444" stroke="#f0c3ac" strokeWidth="2" />
        <path d="m780 414-5 8m-8 10-12 11" stroke="#e67b60" strokeWidth="1.800" />
        <path d="m755 444-6 6-2 7 3 15 6 16 3 12" stroke="#f19a7c" strokeWidth="3.600" />
        <path d="m753 446-4 5-2 6 3 13" stroke="#c42a33" strokeWidth="2.800" />
        <path d="m750 468 6 20 3 11" stroke="#dd654f" strokeWidth="2" strokeDasharray="5 2" />
        <path d="m760 500 1 13 4 9 9 6 14 5 17 4 13 6" stroke="#dccfc8" strokeWidth="4.200" />
        <path d="m759 495 2 16 3 12 9 5 13 5 17 4 14 6" stroke="#50566c" strokeWidth="1.600" strokeDasharray="2 4 3 2 1 3" />
        <path d="m776 531 12 2 15 5 10 3" stroke="#50566c" strokeWidth="3" strokeDasharray="1 5 1 3" />
        <path d="M821 547c6 5 9 12 12 23" stroke="#ee8468" strokeWidth="4.500" />
        <path d="M825 552c4 4 6 9 8 18" stroke="#c42a33" strokeWidth="2.500" strokeDasharray="6 1" />
      </g>

      <rect x="1034" y="238" width="16" height="154" fill="url(#coolwarm)" />
      <path d="M1047 237.500h12M1047 257.500h12M1047 302.500h12M1047 347.500h12M1047 391.500h12" stroke="#fff" />
      <g fill="#fff" fontFamily="Lato, sans-serif" fontSize="16" fontWeight="300">
        <text x="1065" y="242" textLength="59" lengthAdjust="spacingAndGlyphs">1.7e+00</text>
        <text x="1065" y="262" textLength="21" lengthAdjust="spacingAndGlyphs">1.5</text>
        <text x="1064" y="307">1</text>
        <text x="1064" y="352" textLength="22" lengthAdjust="spacingAndGlyphs">0.5</text>
        <text x="1064" y="396" textLength="60" lengthAdjust="spacingAndGlyphs">0.0e+00</text>
        <text transform="translate(1141 363) rotate(-90)" x="0" y="0" textLength="99" lengthAdjust="spacingAndGlyphs">water_depth</text>
      </g>

      <path d="m558.500 634-6-24" stroke="#10d030" strokeWidth="1.300" />
      <path d="m551.500 606 3.500 8-5 1Z" fill="#0f0" />
      <path d="m558.500 634 5-12" stroke="#c9c02c" strokeWidth="1.300" />
      <circle cx="564.500" cy="620" r="2.200" fill="#d7d500" />
      <path d="M558.500 634.500h27" stroke="#f00" strokeWidth="1.400" />
      <path d="m584 632 7 2.500-7 2.500Z" fill="#f00" />
      <g fill="#dcdce4" fontFamily="Liberation Sans" fontSize="10">
        <text x="554" y="612">Z</text>
        <text x="565" y="621" fontSize="9">Y</text>
        <text x="585" y="634">X</text>
      </g>
    </svg>
  );
}

function Gradients() {
  return (
    <svg className="absolute size-0">
      <defs>
        <linearGradient id="rainbow" x1="0" y1="0" x2="0" y2="1">
          <stop offset="0" stopColor="#ec9b3e" />
          <stop offset=".3" stopColor="#e3c44a" />
          <stop offset=".5" stopColor="#3fc0b9" />
          <stop offset=".72" stopColor="#2b80c2" />
          <stop offset="1" stopColor="#6a4d92" />
        </linearGradient>
        <linearGradient id="rainbowH">
          <stop offset="0" stopColor="#54539c" />
          <stop offset=".35" stopColor="#35b4cb" />
          <stop offset=".65" stopColor="#e4c83f" />
          <stop offset="1" stopColor="#eb9a35" />
        </linearGradient>
        <linearGradient id="coolwarm" x1="0" y1="0" x2="0" y2="1">
          <stop offset="0" stopColor="#b40426" />
          <stop offset=".125" stopColor="#da5a49" />
          <stop offset=".25" stopColor="#f08b6d" />
          <stop offset=".375" stopColor="#f5b89b" />
          <stop offset=".5" stopColor="#dddcdc" />
          <stop offset=".625" stopColor="#b8cff8" />
          <stop offset=".75" stopColor="#8db0fe" />
          <stop offset=".875" stopColor="#5f80ea" />
          <stop offset="1" stopColor="#3b4cc0" />
        </linearGradient>
      </defs>
    </svg>
  );
}

function PenMarks() {
  return (
    <svg viewBox="0 0 1156 723" className="pointer-events-none absolute inset-0 h-[723px] w-[1156px]" fill="none" strokeLinecap="round" strokeLinejoin="round">
      <path
        stroke="#f00"
        strokeWidth="7"
        d="M577 85C572 74 574 61 582 54c9-6 24-4 36-3 40 4 78-1 112-2 19-1 27-2 33 4 9 6 10 14 7 22-2 8-11 9-22 12-38 9-105 7-147 4-13-1-17-3-24-6"
      />
      <path stroke="#00f" strokeWidth="7" d="M7 245C3 239 6 234 12 233c13-1 22 1 33 2 31 2 62-2 81-1 14 1 16 5 16 11 0 9-4 13-17 16-30 7-68 4-95-4-12-3-18-8-23-13" />
      <path stroke="#0f0" strokeWidth="6.500" d="M4 300C2 289 10 285 19 283c9-1 21 1 31 3 12 2 18 8 20 16 1 8-5 11-13 11-13-1-24-6-37-8-8-2-13-2-16-6" />
      <path stroke="#0f0" strokeWidth="7" d="M82 336c-19-2-44-2-60 4-12 4-12 9-7 14 12 9 36 13 66 10 17-2 34-8 36-14 1-6-8-10-36-12" />
      <path stroke="#0f0" strokeWidth="7" d="M28 420c-12 2-19 5-18 17 0 9 7 13 21 16 20 4 41 3 56-1 14-4 18-10 15-17-8-12-38-12-75-13" />
    </svg>
  );
}

/* ---------- page ---------- */

function Menu() {
  const items: [string, string, string, string][] = [
    ["", "F", "ile", "w-[31px]"],
    ["", "E", "dit", "w-[33px]"],
    ["", "V", "iew", "w-[38px]"],
    ["", "S", "ources", "w-[52px]"],
    ["Fi", "l", "ters", "w-[42px]"],
    ["", "T", "ools", "w-10"],
    ["", "C", "atalyst", "w-[53px]"],
    ["", "M", "acros", "w-[50px]"],
    ["", "H", "elp", "w-10"],
  ];
  return (
    <div className="flex h-5 items-center border-b border-[#cfcfcf] pl-2.5 tracking-[-0.100px]">
      {items.map(([a, u, b, w]) => (
        <div key={u + b} className={`${w} shrink-0`}>
          {a}
          <span className="underline underline-offset-2">{u}</span>
          {b}
        </div>
      ))}
    </div>
  );
}

const BAR = "flex items-center border-b border-[#b9b9b9] bg-linear-to-b from-[#fafafa] to-[#ededed]";

export default function App() {
  return (
    <div className="relative flex h-[723px] w-[1156px] overflow-hidden bg-white pl-[3px] font-['Noto_Sans','Open_Sans',sans-serif] text-[11px] leading-none whitespace-nowrap text-black">
      <Gradients />
      <div className="flex w-[1153px] flex-col border-x border-y border-[#2e2e30] bg-[#eeeeee]">
        {/* title bar */}
        <div className="flex h-[30px] items-center bg-white pl-2">
          <svg viewBox="0 0 16 12" className="mr-[5px] h-3 w-4">
            <path d="M4 0h3L4 12H0Z" fill="#c02a35" />
            <path d="M9 0h3L9 12H5Z" fill="#23964a" />
            <path d="M13.500 0h3l-3 12h-4Z" fill="#1f4b96" />
          </svg>
          <span className="flex-1 text-[12px] tracking-[-0.450px]">ParaView 5.8.0</span>
          <svg className="mr-4 h-3 w-[103px]" fill="none" stroke="#000">
            <path d="M0 6.500h10" />
            <path d="M45.500 1.500h9v9h-9Z" />
            <path d="m91 1 10 10m0-10-10 10" />
          </svg>
        </div>
        <Menu />

        {/* main toolbar */}
        <div className={`${BAR} h-[39px]`}>
          <Grip c="mr-1 w-[9px]" />
          <Cell n="open" /><Cell n="save" /><Sep />
          <Cell n="connect" /><Cell n="disconnect" /><Cell n="history" /><Sep />
          <Cell n="undo" /><Cell n="redo" /><Sep />
          <Cell n="extract" /><Cell n="mapsel" />
          <div className="relative">
            <Cell n="palette" />
            <div className="absolute right-0.5 bottom-0.5"><Tri c="scale-75 text-[#444]" /></div>
          </div>
          <Grip c="mr-1 w-3.5" />
          <Cell n="first" /><Cell n="prev" /><Cell n="play" /><Cell n="next" /><Cell n="last" /><Cell n="loop" />
          <Grip c="mr-[3px] w-[13px]" />
          <span className="w-[30px] tracking-[-0.100px]">Time:</span>
          <Combo c="h-[22px] w-[54px]">5000</Combo>
          <div className="ml-0.5 flex h-[22px] w-[43px] rounded-[2px] border border-[#ababab] bg-white">
            <span className="flex flex-1 items-center pl-1">25</span>
            <div className="flex w-3.5 flex-col items-center justify-center gap-1 border-l border-[#c0c0c0] bg-[#f3f3f3]">
              <Tri up c="scale-90 text-[#999]" />
              <Tri c="scale-90 text-[#555]" />
            </div>
          </div>
          <span className="ml-0.5 w-[60px] tracking-[-0.050px]">(max is 25)</span>
          <Grip c="mr-1 w-[9px]" />
          <Cell n="camwrench" /><Cell n="camplus" />
        </div>

        {/* colour and camera toolbar */}
        <div className={`${BAR} h-[39px]`}>
          <Grip c="mr-1 w-[9px]" />
          <div className="flex h-8 w-8 items-center justify-center rounded-[2px] border border-[#aaa] bg-[#d9d9d9]"><Ic n="bar" c="size-[22px]" /></div>
          <Cell n="editmap" /><Cell n="unlink" /><Cell n="range" /><Cell n="rangec" /><Cell n="ranget" /><Cell n="rangev" />
          <Combo c="h-6 w-[150px]">
            <svg className="mr-[9px] ml-[7px] size-[5px]"><circle cx="2.500" cy="2.500" r="2.200" fill="#f9b917" stroke="#b08a3a" strokeWidth=".6" /></svg>
            <span className="tracking-[0.150px]">water_depth</span>
          </Combo>
          <Combo c="ml-1 h-[22px] w-[65px]" dim />
          <Grip c="mr-1 w-[13px]" />
          <Combo c="h-[22px] w-[150px]">Surface</Combo>
          <Grip c="mr-[5px] w-3" />
          <Cell n="reset" s="size-[23px]" /><Cell n="zoomdata" /><Cell n="zoombox" />
          {["px", "mx", "py", "my", "pz", "mz"].map((n) => <Cell key={n} n={n} s="size-[23px]" />)}
          <Cell n="rotp" s="size-6" /><Cell n="rotm" s="size-6" />
          <Grip c="mr-1 w-[13px]" />
          <div className="flex h-8 w-8 items-center justify-center rounded-[2px] border border-[#aaa] bg-[#d9d9d9]"><Ic n="axes" c="size-[23px]" /></div>
          <Cell n="center" s="size-[23px]" /><Cell n="pick" s="size-[23px]" />
          <span className="ml-4 pb-0.5 text-[16px] text-[#333]">»</span>
          <Grip c="w-[13px]" />
        </div>

        {/* filter toolbar */}
        <div className={`${BAR} h-[38px]`}>
          <Grip c="mr-[3px] w-[9px]" />
          {["calc", "contour", "clip", "slice", "threshold", "subset", "glyph", "stream", "warp", "group", "ungroup"].map((n) => (
            <Cell key={n} n={n} c="w-[33px]" />
          ))}
          <Grip c="mr-[3px] w-[13px]" />
          {["subsetsel", "plotsel", "plotline", "plotdata", "probe"].map((n) => (
            <Cell key={n} n={n} c="w-[33px]" />
          ))}
          <Grip c="mr-[5px] w-3" />
          <Cell n="ruler" />
        </div>

        <div className="flex h-[532px] shrink-0">
          {/* left docks */}
          <div className="flex w-[485px] flex-col">
            <Dock title="Pipeline Browser" c="h-5" />
            <div className="h-[92px] border border-[#b5b5b5] bg-white pt-px">
              <div className="flex h-[22px] items-center">
                <div className="mr-0.5 ml-[26px] flex w-[18px] justify-center"><Ic n="server" c="size-[15px]" /></div>
                <span className="tracking-[-0.200px]">builtin:</span>
              </div>
              <div className="flex h-[22px] items-center">
                <Ic n="eyeOff" c="ml-[5px] size-3" />
                <Ic n="node" c="mr-[3px] ml-2.5 size-4" />
                <span className="tracking-[-0.300px]">results.xdmf</span>
              </div>
              <div className="flex h-[22px] items-center">
                <Ic n="eye" c="ml-[5px] size-[13px]" />
                <div className="ml-2 flex h-[17px] w-[84px] items-center bg-[#308cc6] pl-0.5 tracking-[-0.300px] text-white">
                  <Ic n="nodeSel" c="mr-0.5 size-4" />
                  CellCenters1
                </div>
              </div>
            </div>
            <div className="flex h-1.5 items-center"><Dots /></div>
            <div className="flex h-6 items-end border-b border-[#b5b5b5]">
              <div className="-mb-px flex h-6 w-[73px] items-center justify-center rounded-t-[3px] border border-b-0 border-[#b5b5b5] bg-[#f4f4f4] tracking-[-0.500px]">Properties</div>
              <div className="flex h-[21px] w-[81px] items-center justify-center rounded-tr-[3px] border border-b-0 border-l-0 border-[#b5b5b5] bg-[#dedede] pt-px tracking-[-0.400px]">Information</div>
            </div>
            <Dock title="Properties" c="h-[21px]" />
            <div className="flex h-[38px] gap-[2px] pt-2 pb-1.5 pl-[9px]">
              <div className={`${BTN} w-[115px] gap-0.5 border-[#cfcfcf] text-[#b0b0b0]`}><Ic n="applyGrey" c="size-[13px]" />Apply</div>
              <div className={`${BTN} w-[116px] gap-0.5 border-[#cfcfcf] text-[#b0b0b0]`}><Ic n="forbid" c="size-[13px]" />Reset</div>
              <div className={`${BTN} w-[115px] gap-1 border-[#b0b0b0] tracking-[-0.250px]`}><Ic n="cross" c="size-[11px]" />Delete</div>
              <div className={`${BTN} w-[115px] border-[#b0b0b0]`}><Ic n="help" c="size-3.5" /></div>
            </div>
            <div className="flex h-[23px] gap-0.5 pl-[9px]">
              <div className="flex w-[441px] items-center rounded-[2px] border border-[#ababab] bg-white pl-0.5 tracking-[-0.060px] text-[#808080]">Search ... (use Esc to clear text)</div>
              <div className={`${BTN} w-6 border-[#b0b0b0]`}><Ic n="gear" c="size-3.5" /></div>
            </div>
            <div className="mt-1.5 flex h-[116px] pl-[9px]">
              <div className="w-[454px] shrink-0">
                <Group title="Properties (CellCenters1)" />
                <div className="flex h-8 items-center">
                  <svg className="mr-1.5 size-[13px] border border-[#bbb] bg-white"><path d="m2 6 2.500 3L9 1.500" fill="none" stroke="#111" strokeWidth="1.800" /></svg>
                  <span className="pb-0.5 tracking-[-0.250px]">Vertex Cells</span>
                </div>
                <Group title="Display (GeometryRepresentation)" />
                <div className="mt-1.5 flex h-[23px]">
                  <span className="w-[93px] pt-px tracking-[-0.420px]">Representation</span>
                  <Combo c="h-[22px] w-[360px]"><span className="tracking-[-0.200px]">Surface</span></Combo>
                </div>
              </div>
              <ScrollBar c="h-[116px]" thumb="h-[28px]" />
            </div>
            <div className="flex h-[22px] items-center"><Dots /></div>
            <Dock title="Export Inspector" c="h-1.5 mb-px" />
            <div className="mt-[13px] flex h-6 items-center gap-1.5 pl-[9px]">
              <div className="flex h-[23px] w-[399px] items-center rounded-[2px] border border-[#ababab] bg-white pl-0.5 tracking-[-0.060px] text-[#808080]">Search ... (use Esc to clear text)</div>
              <div className={`${BTN} h-6 w-7 border-[#b0b0b0]`}><Ic n="gear" c="size-3.5" /></div>
              <div className={`${BTN} h-6 w-7 border-[#b0b0b0]`}><Ic n="help" c="size-3.5" /></div>
            </div>
            <div className="mt-[7px] flex h-[103px] pl-[9px] tracking-[-0.200px]">
              <div className="w-[453px] shrink-0">
                <ExtractRow title="Data Extracts" a="CellCenters1" b="CSVWriter" ca="h-[22px] w-[183px]" cb="h-[22px] w-[182px]" />
                <ExtractRow title="Image Extracts" a="RenderView1" b="PNG image (*.png)" ca="h-[22px] w-[181px]" cb="h-[22px] w-[184px]" />
              </div>
              <ScrollBar c="h-[103px]" thumb="h-[42px]" />
            </div>
          </div>

          {/* vertical splitter */}
          <div className="flex w-[7px] items-center justify-center">
            <svg className="h-4 w-px"><path d="M.500 0v16" stroke="#aaa" strokeDasharray="1 2" /></svg>
          </div>

          {/* render area */}
          <div className="flex w-[660px] flex-col pt-0.5">
            <div className="flex h-[26px] items-end">
              <div className="flex h-[26px] w-[108px] items-center rounded-t-[3px] border border-b-0 border-[#b0b0b0] bg-white pl-2.5">
                <Ic n="window" c="mr-1 size-4" />
                <span className="w-[53px] pb-0.5 tracking-[-0.100px]">Layout #1</span>
                <Ic n="close" c="size-[11px]" />
              </div>
              <div className="flex h-[25px] w-8 items-center justify-center rounded-tr-[3px] border border-b-0 border-l-0 border-[#b0b0b0] bg-[#e2e2e2] text-[13px]">+</div>
              <div className="h-px flex-1 bg-[#b0b0b0]" />
            </div>
            <div className="flex h-[27px] items-center border-l border-[#b0b0b0] pb-px">
              <div className="flex w-[449px] items-center pl-[5px]">
                <Ic n="vundo" c="mr-2 size-[18px]" />
                <Ic n="vredo" c="size-[18px]" />
                <Sep c="w-3.5" h="h-3.5" />
                <Ic n="capture" c="size-[18px]" />
                <Sep c="w-4" h="h-3.5" />
                <span className="mr-2 w-[15px] text-[11px] font-bold tracking-[-0.500px] text-[#6a6a58]">3D</span>
                <Ic n="campen" c="size-[18px]" />
                <Sep c="w-3.5" h="h-3.5" />
                <div className="flex gap-2">
                  {["selplus", "selminus", "seltoggle"].map((n) => <Ic key={n} n={n} c="mx-px size-4" />)}
                </div>
                <Sep c="w-3.5" h="h-3.5" />
                <div className="flex gap-2">
                  {["selcells", "selpoints", "frust", "frustp", "poly", "polyp", "block", "magn"].map((n) => <Ic key={n} n={n} c="mx-px size-4" />)}
                </div>
              </div>
              <span className="w-[15px] pb-0.5 pl-1.5 text-[14px] text-[#333]">»</span>
              <b className="w-[74px] tracking-[0.200px] underline underline-offset-2">RenderView1</b>
              <div className="ml-auto flex h-6 gap-0.5 pr-[3px]">
                <div className={`${BTN} w-[25px] border-[#b0b0b0]`}><Ic n="splitV" c="size-4" /></div>
                <div className={`${BTN} w-[25px] border-[#b0b0b0]`}><Ic n="splitH" c="size-4" /></div>
                <div className={`${BTN} w-[25px] border-[#b0b0b0]`}><Ic n="window" c="size-[18px]" /></div>
                <div className={`${BTN} w-[25px] border-[#b0b0b0]`}><Ic n="close" c="size-[11px]" /></div>
              </div>
            </div>
            <div className="flex h-[476px] w-[659px] border-b border-l border-[#b0b0b0]">
              <div className="h-[475px] w-[656px] border-2 border-[#0000ff] bg-white p-px">
                <div className="h-[469px] bg-[#53576e]"><Scene /></div>
              </div>
            </div>
          </div>
        </div>

        {/* status bar */}
        <div className="flex flex-1 items-center pl-[565px]">
          <div className={`${BTN} h-[19px] w-5 border-[#ccc]`}><Ic n="crossGrey" c="size-2" /></div>
          <div className="ml-0.5 h-[19px] w-[540px] border-t border-r border-b border-l border-[#a5a5a5] border-r-white border-b-white" />
          <svg className="ml-auto h-3 w-3 self-end" fill="#b5b5b5">
            <path d="M10 1h1v1h-1ZM7 4h1v1H7ZM10 4h1v1h-1ZM4 7h1v1H4ZM7 7h1v1H7ZM10 7h1v1h-1ZM1 10h1v1H1ZM4 10h1v1H4ZM7 10h1v1H7ZM10 10h1v1h-1Z" />
          </svg>
        </div>
      </div>
      <PenMarks />
    </div>
  );
}
